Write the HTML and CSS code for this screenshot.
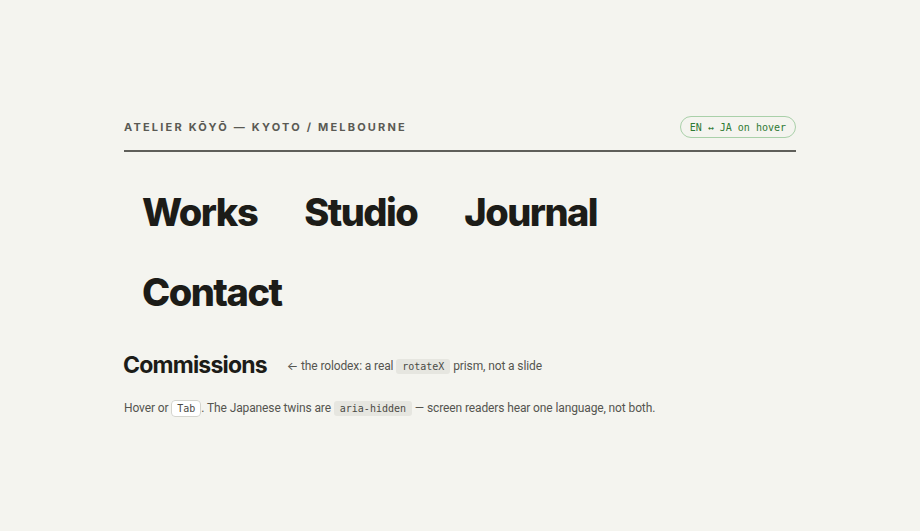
FILE: index.html
```html
<!DOCTYPE html>
<html lang="en">
<head>
<meta charset="utf-8">
<title>Atelier Kōyō</title>
<link rel="stylesheet" href="styles.css">
</head>
<body>
<main class="page">
  <header class="masthead">
    <div class="brand">Atelier Kōyō — Kyoto / Melbourne</div>
    <div class="pill">EN ↔ JA on hover</div>
  </header>
  <nav class="nav">
    <a class="nav-item" href="#">Works</a>
    <a class="nav-item" href="#">Studio</a>
    <a class="nav-item" href="#">Journal</a>
    <a class="nav-item" href="#">Contact</a>
  </nav>
  <section class="commissions">
    <h2 class="title">Commissions</h2>
    <span class="caption"><span class="arrow">←</span> the rolodex: a real <code class="code">rotateX</code> prism, not a slide</span>
  </section>
  <p class="note">Hover or <kbd class="kbd">Tab</kbd>. The Japanese twins are <code class="code">aria-hidden</code> — screen readers hear one language, not both.</p>
</main>
</body>
</html>
```
FILE: styles.css
```css
html, body {
  margin: 0;
  padding: 0;
  background: #f4f4ef;
}
body {
  font-family: Inter, "Noto Sans", "Liberation Sans", sans-serif;
  color: #1c1c18;
}
.page {
  width: 672px;
  margin: 0 auto;
  padding-top: 116px;
}
.masthead {
  display: flex;
  align-items: center;
  justify-content: space-between;
  padding-bottom: 12px;
  border-bottom: 2px solid #5f5f5a;
}
.brand {
  font-size: 11px;
  font-weight: 700;
  letter-spacing: 0.2em;
  text-transform: uppercase;
  color: #5a5a54;
}
.pill {
  height: 22px;
  box-sizing: border-box;
  display: flex;
  align-items: center;
  padding: 0 9px;
  border: 1px solid #a9d0a9;
  border-radius: 11px;
  font-family: "DejaVu Sans Mono", "Liberation Mono", monospace;
  font-size: 10px;
  color: #2f7a34;
}
.nav {
  display: flex;
  flex-wrap: wrap;
  column-gap: 11px;
  margin-top: 20px;
}
.nav-item {
  display: block;
  padding: 0 18px;
  font-size: 38px;
  line-height: 80px;
  font-weight: 800;
  letter-spacing: -0.04em;
  color: #1c1c18;
  text-decoration: none;
}
.commissions {
  display: flex;
  align-items: center;
  gap: 20px;
  margin-top: 19px;
}
.title {
  margin: 0 0 0 -1px;
  font-size: 23px;
  line-height: 28px;
  font-weight: 700;
  letter-spacing: -0.035em;
}
.caption {
  font-family: Roboto, "Liberation Sans", sans-serif;
  font-size: 12px;
  letter-spacing: -0.01em;
  color: #55554f;
}
.arrow {
  font-family: Inter, "DejaVu Sans", sans-serif;
}
.code {
  font-family: "DejaVu Sans Mono", "Liberation Mono", monospace;
  font-size: 10px;
  letter-spacing: 0;
  background: #e6e6e0;
  border-radius: 3px;
  padding: 2px 6px;
  color: #4a4a45;
}
.note {
  margin: 20px 0 0;
  font-family: Roboto, "Liberation Sans", sans-serif;
  font-size: 12px;
  letter-spacing: -0.01em;
  line-height: 19px;
  color: #55554f;
}
.kbd {
  font-family: "DejaVu Sans Mono", "Liberation Mono", monospace;
  font-size: 10px;
  letter-spacing: 0;
  background: #ffffff;
  border: 1px solid #d4d4ce;
  border-radius: 4px;
  padding: 2px 5px;
  color: #4a4a45;
}
```
